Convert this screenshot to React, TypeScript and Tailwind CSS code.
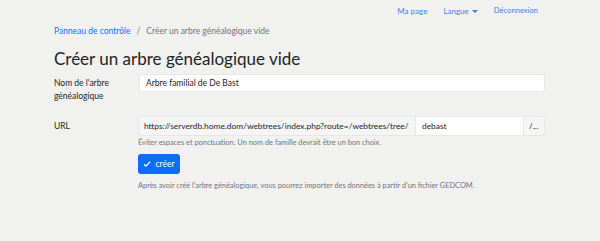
export default function App() {
  const font = { fontFamily: 'Lato, "Noto Sans", sans-serif' };
  return (
    <div
      className="h-[241px] w-[600px] overflow-hidden bg-[#f1f1f0] text-[#212529]"
      style={font}
    >
      {/* top nav */}
      <nav className="flex h-[22px] items-center justify-end gap-[16px] pr-[62px] text-[8px] text-[#3b82f6]">
        <span>Ma page</span>
        <span className="flex items-center gap-[3px]">
          Langue
          <span className="inline-block h-0 w-0 border-x-[3px] border-t-[3px] border-x-transparent border-t-[#3b82f6]" />
        </span>
        <span className="text-[7.6px]">Déconnexion</span>
      </nav>

      <main className="pl-[54px] pr-[55px]">
        <div className="mt-[3px] flex h-[12px] items-center gap-[6px] text-[8.5px]">
          <span className="text-[#0d6efd]">Panneau de contrôle</span>
          <span className="text-[#6c757d]">/</span>
          <span className="text-[#6c757d]">Créer un arbre généalogique vide</span>
        </div>

        <h1 className="mt-[11px] h-[22px] text-[17px] leading-[22px]">
          Créer un arbre généalogique vide
        </h1>

        <div className="mt-[4px] flex">
          <label className="w-[85px] pt-[3px] text-[8.5px] leading-[13px]">
            Nom de l'arbre
            <br />
            généalogique
          </label>
          <div className="flex h-[18px] flex-1 items-center rounded-[3px] border border-[#e5e7eb] bg-white px-[6px] text-[8.5px]">
            Arbre familial de De Bast
          </div>
        </div>

        <div className="mt-[13px] flex">
          <label className="flex h-[20px] w-[85px] items-center text-[8.5px]">URL</label>
          <div className="flex-1">
            <div className="flex h-[20px] text-[8.4px]">
              <div className="flex w-[278px] items-center overflow-hidden whitespace-nowrap rounded-l-[3px] border border-[#e5e7eb] bg-[#f5f5f5] px-[5px]">
                https://serverdb.home.dom/webtrees/index.php?route=/webtrees/tree/
              </div>
              <div className="flex w-[107px] items-center border-y border-[#e5e7eb] bg-white px-[6px]">
                debast
              </div>
              <div className="flex w-[22px] items-center rounded-r-[3px] border border-[#e5e7eb] bg-[#f5f5f5] px-[5px]">
                /...
              </div>
            </div>
            <p className="mt-[1px] whitespace-nowrap text-[7.4px] leading-[12px] text-[#6c757d]">
              Éviter espaces et ponctuation. Un nom de famille devrait être un bon choix.
            </p>
            <button className="mt-[5px] flex h-[20px] w-[42px] items-center justify-center gap-[4px] rounded-[3px] bg-[#0d6efd] text-[8.5px] text-white">
              <svg width="8" height="8" viewBox="0 0 16 16" fill="none" stroke="white" strokeWidth="2.4">
                <path d="M2 8.5l4 4 8-9" />
              </svg>
              créer
            </button>
            <p className="mt-[6px] whitespace-nowrap text-[7.4px] leading-[12px] text-[#6c757d]">
              Après avoir créé l'arbre généalogique, vous pourrez importer des données à partir d'un fichier GEDCOM.
            </p>
          </div>
        </div>
      </main>
    </div>
  );
}
